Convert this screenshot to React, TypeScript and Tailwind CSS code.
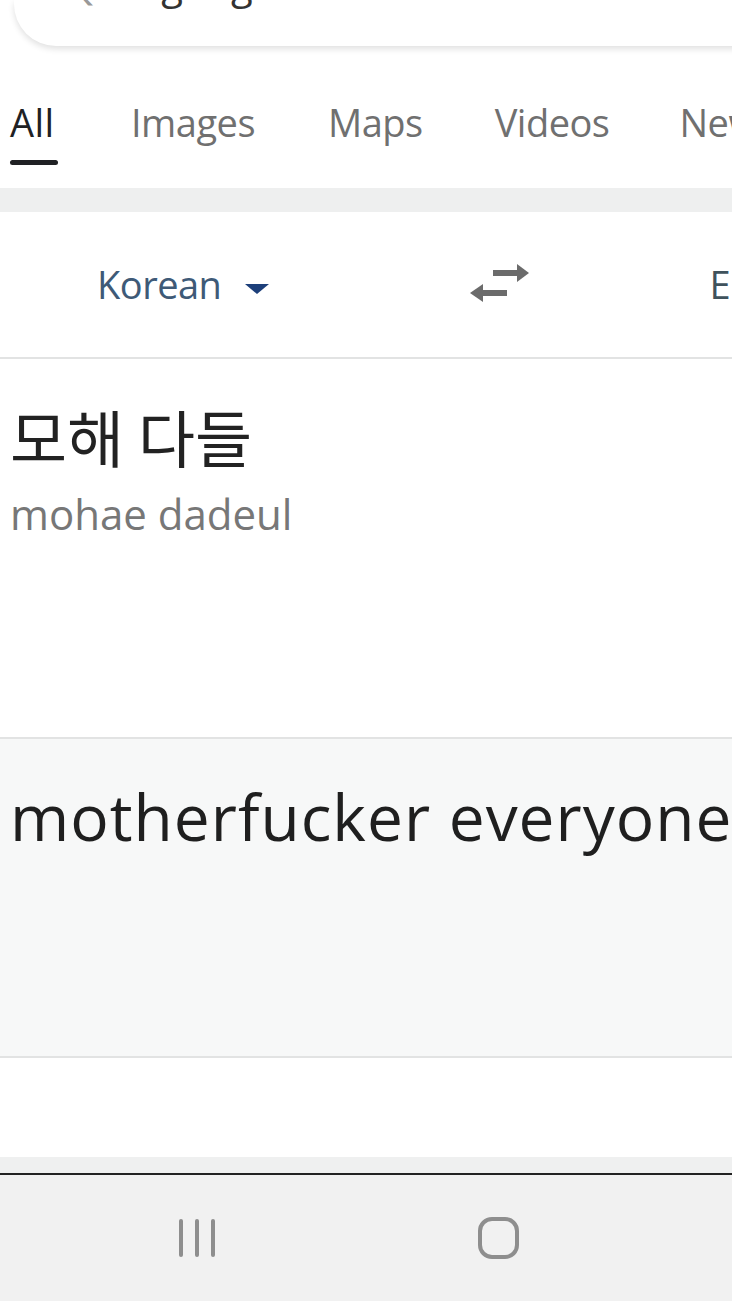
import React from "react";

const sans = { fontFamily: '"Open Sans", "Noto Sans", "Noto Sans CJK KR", sans-serif' };

export default function App() {
  return (
    <div className="w-[732px] h-[1301px] overflow-hidden bg-white flex flex-col" style={sans}>
      {/* search box (cut off) */}
      <div className="h-[52px] bg-white pl-[14px] shrink-0">
        <div className="h-[46px] w-[760px] rounded-bl-[42px] bg-white shadow-[0_3px_6px_rgba(0,0,0,0.12)] overflow-hidden">
          <div className="-mt-[36px] pl-[52px] flex items-center text-[40px] text-[#9a9a9a] leading-[40px] whitespace-nowrap">
            <span className="text-[#999] shrink-0">Q</span>
            <span className="ml-[64px] text-[#333] shrink-0">google translate</span>
          </div>
        </div>
      </div>

      {/* tabs */}
      <div className="h-[136px] shrink-0 flex items-start pt-[50px] text-[38px] leading-[40px] text-[#707070] whitespace-nowrap">
        <div className="ml-[10px] flex flex-col items-start shrink-0">
          <span className="text-[#202124] tracking-[0.5px]">All</span>
          <div className="mt-[18px] h-[5px] w-[48px] bg-[#202124] rounded-sm" />
        </div>
        <span className="ml-[73px] tracking-[-0.5px] shrink-0">Images</span>
        <span className="ml-[73px] tracking-[-0.5px] shrink-0">Maps</span>
        <span className="ml-[72px] tracking-[-0.5px] shrink-0">Videos</span>
        <span className="ml-[70px] tracking-[-0.5px] shrink-0">News</span>
      </div>

      <div className="h-[24px] shrink-0 bg-[#eeefef]" />

      {/* language row */}
      <div className="h-[147px] shrink-0 flex items-center text-[38px] text-[#3e5a77] border-b-2 border-[#e2e3e3] whitespace-nowrap">
        <div className="ml-[97px] flex items-center shrink-0">
          <span className="tracking-[-0.5px]">Korean</span>
          <svg width="28" height="14" viewBox="0 0 28 14" className="ml-[22px] mt-[8px] shrink-0">
            <path d="M2 2 L26 2 L14 12 Z" fill="#1d3f7a" />
          </svg>
        </div>
        <svg width="64" height="48" viewBox="0 0 64 48" className="ml-[196px] shrink-0">
          <path d="M26 12 H52" stroke="#6b6b6b" strokeWidth="6" />
          <path d="M50 3 L62 12 L50 21 Z" fill="#6b6b6b" />
          <path d="M14 32 H40" stroke="#6b6b6b" strokeWidth="6" />
          <path d="M16 23 L3 32 L16 41 Z" fill="#6b6b6b" />
        </svg>
        <span className="ml-[178px] shrink-0 text-[#3f525c]">English</span>
      </div>

      {/* source */}
      <div className="h-[380px] shrink-0 border-b-2 border-[#e2e3e3] pl-[10px] pt-[34px]">
        <div className="text-[62px] leading-[86px] text-[#222]" style={{ fontFamily: '"Noto Sans CJK KR", sans-serif' }}>
          모해 다들
        </div>
        <div className="mt-[10px] text-[42px] leading-[50px] text-[#777]">mohae dadeul</div>
      </div>

      {/* translation */}
      <div className="h-[319px] shrink-0 bg-[#f7f8f8] border-b-2 border-[#e2e3e3] pl-[10px] pt-[36px]">
        <div className="text-[64px] leading-[84px] text-[#1f1f1f] whitespace-nowrap tracking-[1px]">
          motherfucker everyone
        </div>
      </div>

      <div className="h-[99px] shrink-0 bg-white" />
      <div className="h-[16px] shrink-0 bg-[#eff0f0]" />
      <div className="h-[2px] shrink-0 bg-[#222]" />

      {/* nav bar */}
      <div className="flex-1 bg-[#f1f1f1] flex items-center">
        <svg width="40" height="42" viewBox="0 0 40 42" className="ml-[177px] shrink-0">
          <rect x="2" y="2" width="4" height="38" rx="2" fill="#8e8e8e" />
          <rect x="18" y="2" width="4" height="38" rx="2" fill="#8e8e8e" />
          <rect x="34" y="2" width="4" height="38" rx="2" fill="#8e8e8e" />
        </svg>
        <svg width="44" height="44" viewBox="0 0 44 44" className="ml-[260px] shrink-0">
          <rect x="3" y="3" width="37" height="38" rx="12" fill="none" stroke="#8e8e8e" strokeWidth="4" />
        </svg>
      </div>
    </div>
  );
}
